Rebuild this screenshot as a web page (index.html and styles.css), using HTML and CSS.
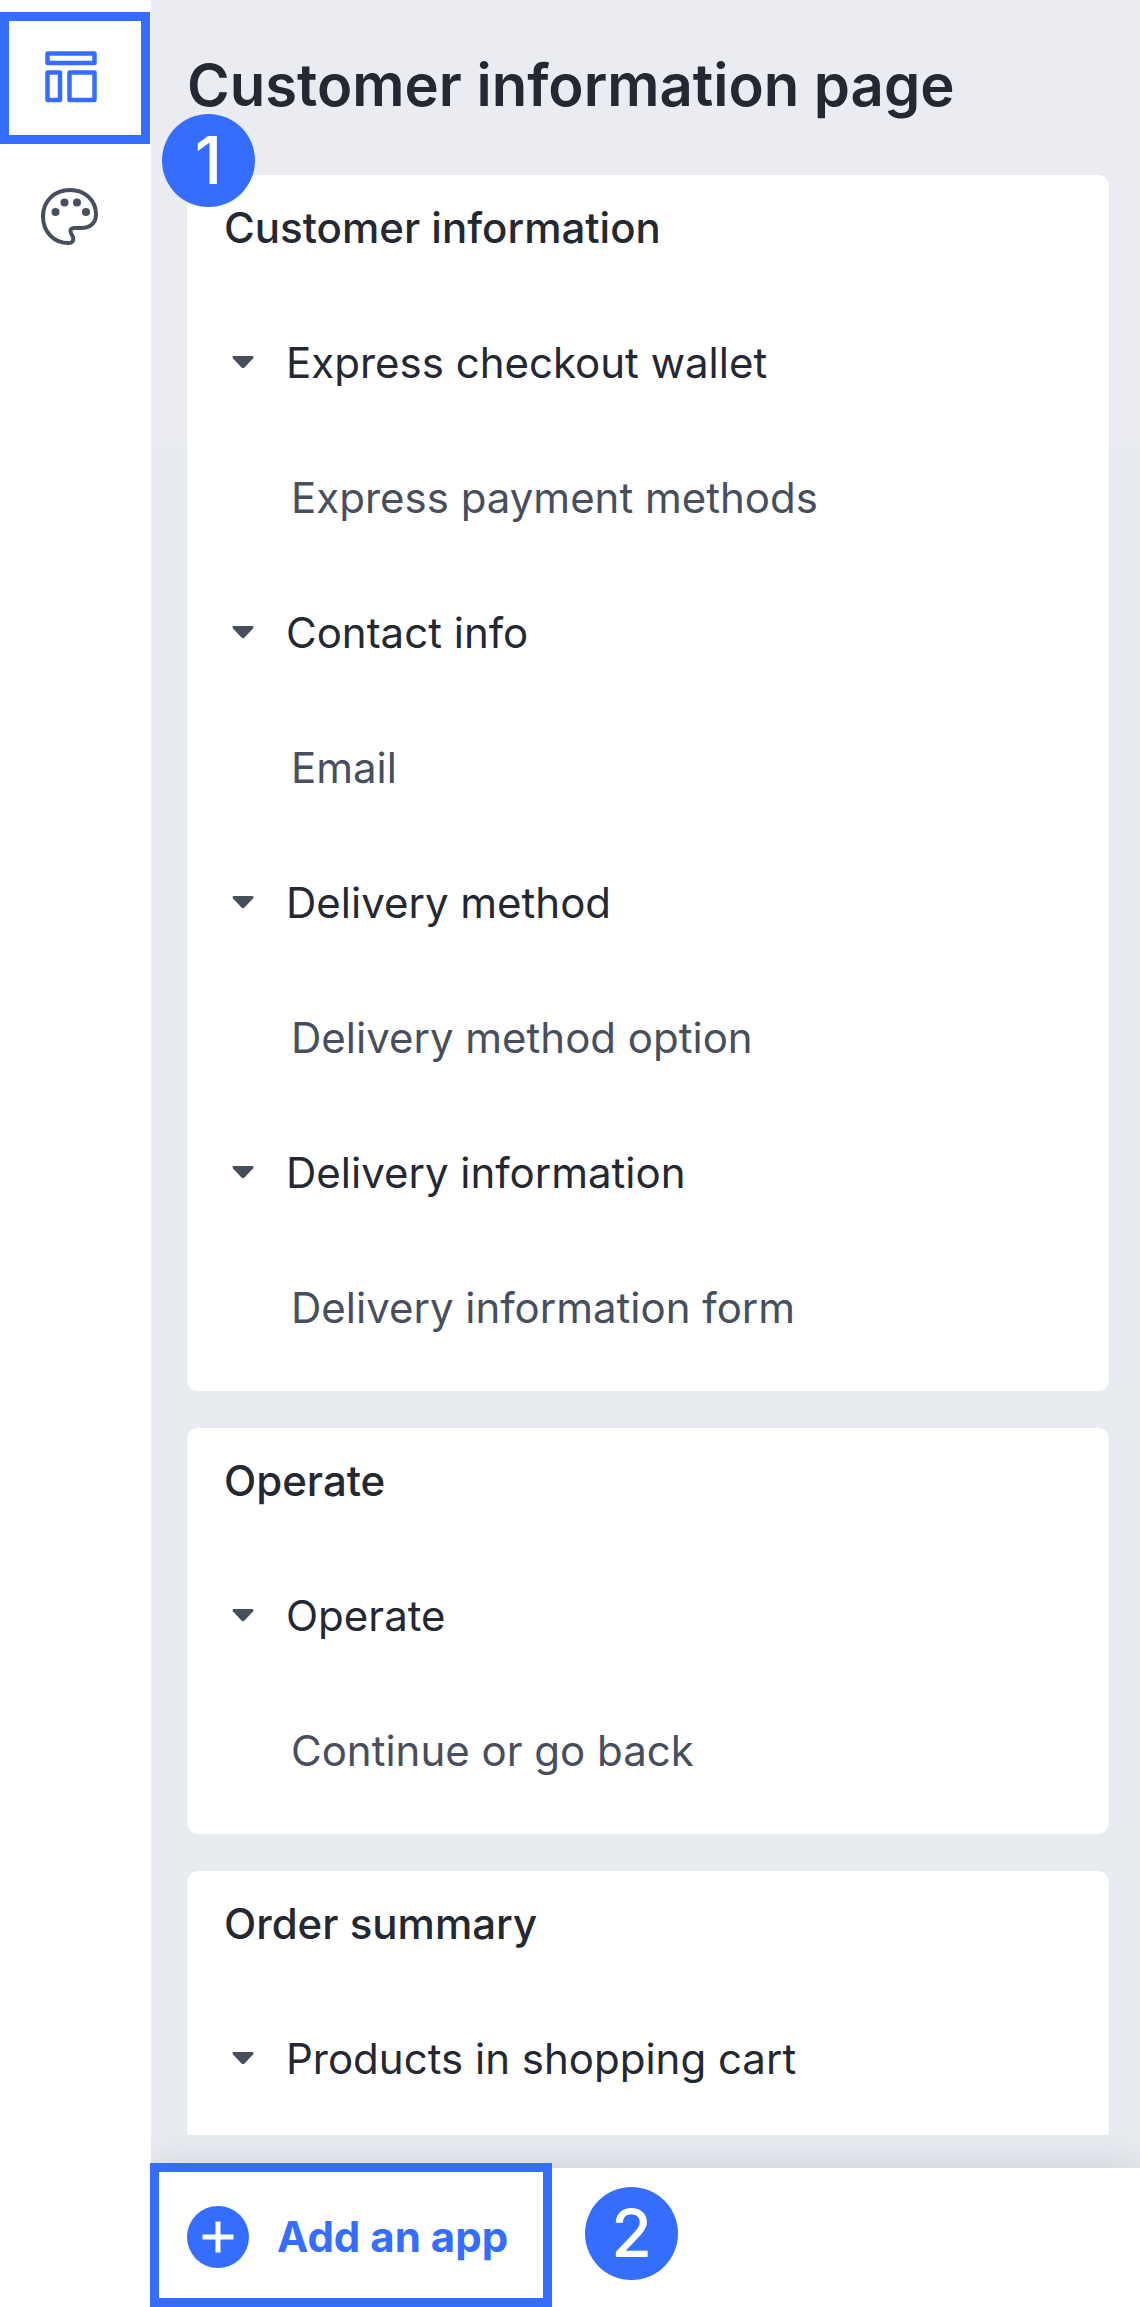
FILE: index.html
```html
<!DOCTYPE html>
<html lang="en">
<head>
<meta charset="utf-8">
<meta name="viewport" content="width=device-width, initial-scale=1">
<title>Customer information page</title>
<link rel="stylesheet" href="styles.css">
</head>
<body>
<div class="editor">
  <nav class="rail" aria-label="Editor sections">
    <button class="rail-item rail-item-active" type="button" aria-label="Layout">
      <svg class="rail-icon" viewBox="0 0 60 60" fill="none" stroke="currentColor" stroke-width="4.500" stroke-linejoin="round">
        <rect x="7.500" y="5.500" width="47" height="9.500"/>
        <rect x="7.500" y="24.500" width="12.500" height="27.500"/>
        <rect x="29.500" y="24.500" width="25" height="27.500"/>
      </svg>
    </button>
    <span class="badge badge-rail">1</span>
    <button class="rail-item" type="button" aria-label="Theme">
      <svg class="rail-icon" viewBox="0 0 60 60" fill="none" stroke="currentColor" stroke-width="4" stroke-linejoin="round">
        <path d="M30 3C14.500 3 3 14 3 29.500C3 45 14 56 28.500 56C32.500 56 34 53.500 33 50C32 47.500 30.500 46.500 30.500 44C30.500 41.500 32 41 35 41H41C50 41 56 36 56 27.500C56 13 44.500 3 30 3Z"/>
        <g fill="currentColor" stroke="none">
          <circle cx="15.500" cy="25" r="4"/>
          <circle cx="24.500" cy="15.500" r="4"/>
          <circle cx="37" cy="15.500" r="4"/>
          <circle cx="46" cy="25" r="4"/>
        </g>
      </svg>
    </button>
  </nav>

  <div class="panel">
    <main class="panel-scroll">
      <h1 class="page-title">Customer information page</h1>

      <section class="card">
        <h2 class="row card-title">Customer information</h2>
        <button class="row group" type="button" aria-expanded="true"><svg class="caret" viewBox="0 0 22 14"><path d="M1 0H21Q22 1 21 2.500L12.500 11.500Q11 13 9.500 11.500L1 2.500Q0 1 1 0Z" fill="currentColor"/></svg>Express checkout wallet</button>
        <a class="row item" href="#express">Express payment methods</a>
        <button class="row group" type="button" aria-expanded="true"><svg class="caret" viewBox="0 0 22 14"><path d="M1 0H21Q22 1 21 2.500L12.500 11.500Q11 13 9.500 11.500L1 2.500Q0 1 1 0Z" fill="currentColor"/></svg>Contact info</button>
        <a class="row item" href="#email">Email</a>
        <button class="row group" type="button" aria-expanded="true"><svg class="caret" viewBox="0 0 22 14"><path d="M1 0H21Q22 1 21 2.500L12.500 11.500Q11 13 9.500 11.500L1 2.500Q0 1 1 0Z" fill="currentColor"/></svg>Delivery method</button>
        <a class="row item" href="#delivery-method">Delivery method option</a>
        <button class="row group" type="button" aria-expanded="true"><svg class="caret" viewBox="0 0 22 14"><path d="M1 0H21Q22 1 21 2.500L12.500 11.500Q11 13 9.500 11.500L1 2.500Q0 1 1 0Z" fill="currentColor"/></svg>Delivery information</button>
        <a class="row item" href="#delivery-information">Delivery information form</a>
      </section>

      <section class="card">
        <h2 class="row card-title">Operate</h2>
        <button class="row group" type="button" aria-expanded="true"><svg class="caret" viewBox="0 0 22 14"><path d="M1 0H21Q22 1 21 2.500L12.500 11.500Q11 13 9.500 11.500L1 2.500Q0 1 1 0Z" fill="currentColor"/></svg>Operate</button>
        <a class="row item" href="#continue">Continue or go back</a>
      </section>

      <section class="card">
        <h2 class="row card-title">Order summary</h2>
        <button class="row group" type="button" aria-expanded="true"><svg class="caret" viewBox="0 0 22 14"><path d="M1 0H21Q22 1 21 2.500L12.500 11.500Q11 13 9.500 11.500L1 2.500Q0 1 1 0Z" fill="currentColor"/></svg>Products in shopping cart</button>
      </section>
    </main>

    <footer class="panel-footer">
      <button class="add-app" type="button">
        <svg class="plus" viewBox="0 0 62 62">
          <circle cx="31" cy="31" r="31" fill="currentColor"/>
          <path d="M31 15.500V46.500M15.500 31H46.500" stroke="#fff" stroke-width="5"/>
        </svg>
        Add an app
      </button>
      <span class="badge">2</span>
    </footer>
  </div>
</div>
</body>
</html>
```

FILE: styles.css
```css
:root {
  --blue: #356dff;
  --ink: #242833;
  --muted: #474f5e;
}

* {
  box-sizing: border-box;
}

body {
  margin: 0;
  background: #fff;
  color: var(--ink);
  font-family: Inter, "Liberation Sans", sans-serif;
  font-size: 42px;
}

button {
  margin: 0;
  padding: 0;
  border: 0;
  background: none;
  color: inherit;
  font: inherit;
  text-align: left;
  cursor: pointer;
}

.editor {
  display: flex;
  height: 100vh;
}

.rail {
  position: relative;
  z-index: 1;
  flex: none;
  width: 151px;
  padding-top: 12px;
  background: #fff;
}

.rail-item {
  display: flex;
  align-items: center;
  justify-content: center;
  width: 150px;
  height: 132px;
  border: 9px solid transparent;
  padding-right: 10px;
  color: var(--muted);
}

.rail-item-active {
  border-color: var(--blue);
  color: var(--blue);
}

.rail-item + .badge + .rail-item {
  margin-top: 7px;
}

.rail-icon {
  width: 60px;
  height: 60px;
}

.badge {
  display: flex;
  align-items: center;
  justify-content: center;
  width: 93px;
  height: 93px;
  border-radius: 50%;
  background: var(--blue);
  color: #fff;
  font-size: 66px;
  font-weight: 500;
  line-height: 93px;
}

.badge-rail {
  position: absolute;
  top: 114px;
  left: 162px;
}

.panel {
  display: flex;
  flex: 1;
  flex-direction: column;
  min-width: 0;
  background: linear-gradient(#ebecf1 444px, #e8ecf1 444px);
}

.panel-scroll {
  display: flex;
  flex: 1;
  flex-direction: column;
  gap: 37px;
  min-height: 0;
  margin-bottom: 33px;
  padding: 0 31px 0 36px;
  overflow-y: auto;
  scrollbar-width: none;
}

.page-title {
  flex: none;
  margin: 0;
  padding-top: 32px;
  font-size: 58px;
  font-weight: 600;
  line-height: 106px;
}

.card {
  flex: none;
  padding-bottom: 1px;
  border-radius: 11px;
  background: #fff;
}

.row {
  display: flex;
  align-items: center;
  width: 100%;
  height: 135px;
  padding-bottom: 30px;
  line-height: 60px;
}

.card-title {
  margin: 0;
  padding-left: 37px;
  font-size: 42px;
  font-weight: 500;
}

.group {
  gap: 32px;
  padding-left: 45px;
}

.item {
  padding-left: 104px;
  color: var(--muted);
  text-decoration: none;
}

.caret {
  width: 22px;
  height: 14px;
  color: var(--muted);
}

.panel-footer {
  position: relative;
  z-index: 2;
  display: flex;
  flex: none;
  align-items: flex-start;
  gap: 33px;
  height: 139px;
  background: #fff;
  box-shadow: 0 0 36px rgba(36, 40, 51, 0.16);
  clip-path: inset(-40px 0 0 -1px);
}

.panel-footer .badge {
  margin-top: 19px;
}

.add-app {
  display: flex;
  align-items: center;
  gap: 28px;
  min-width: 402px;
  height: 144px;
  margin: -5px 0 0 -1px;
  padding: 3px 28px 0;
  border: 9px solid var(--blue);
  color: var(--blue);
  font-weight: 700;
}

.plus {
  width: 62px;
  height: 62px;
}
```
